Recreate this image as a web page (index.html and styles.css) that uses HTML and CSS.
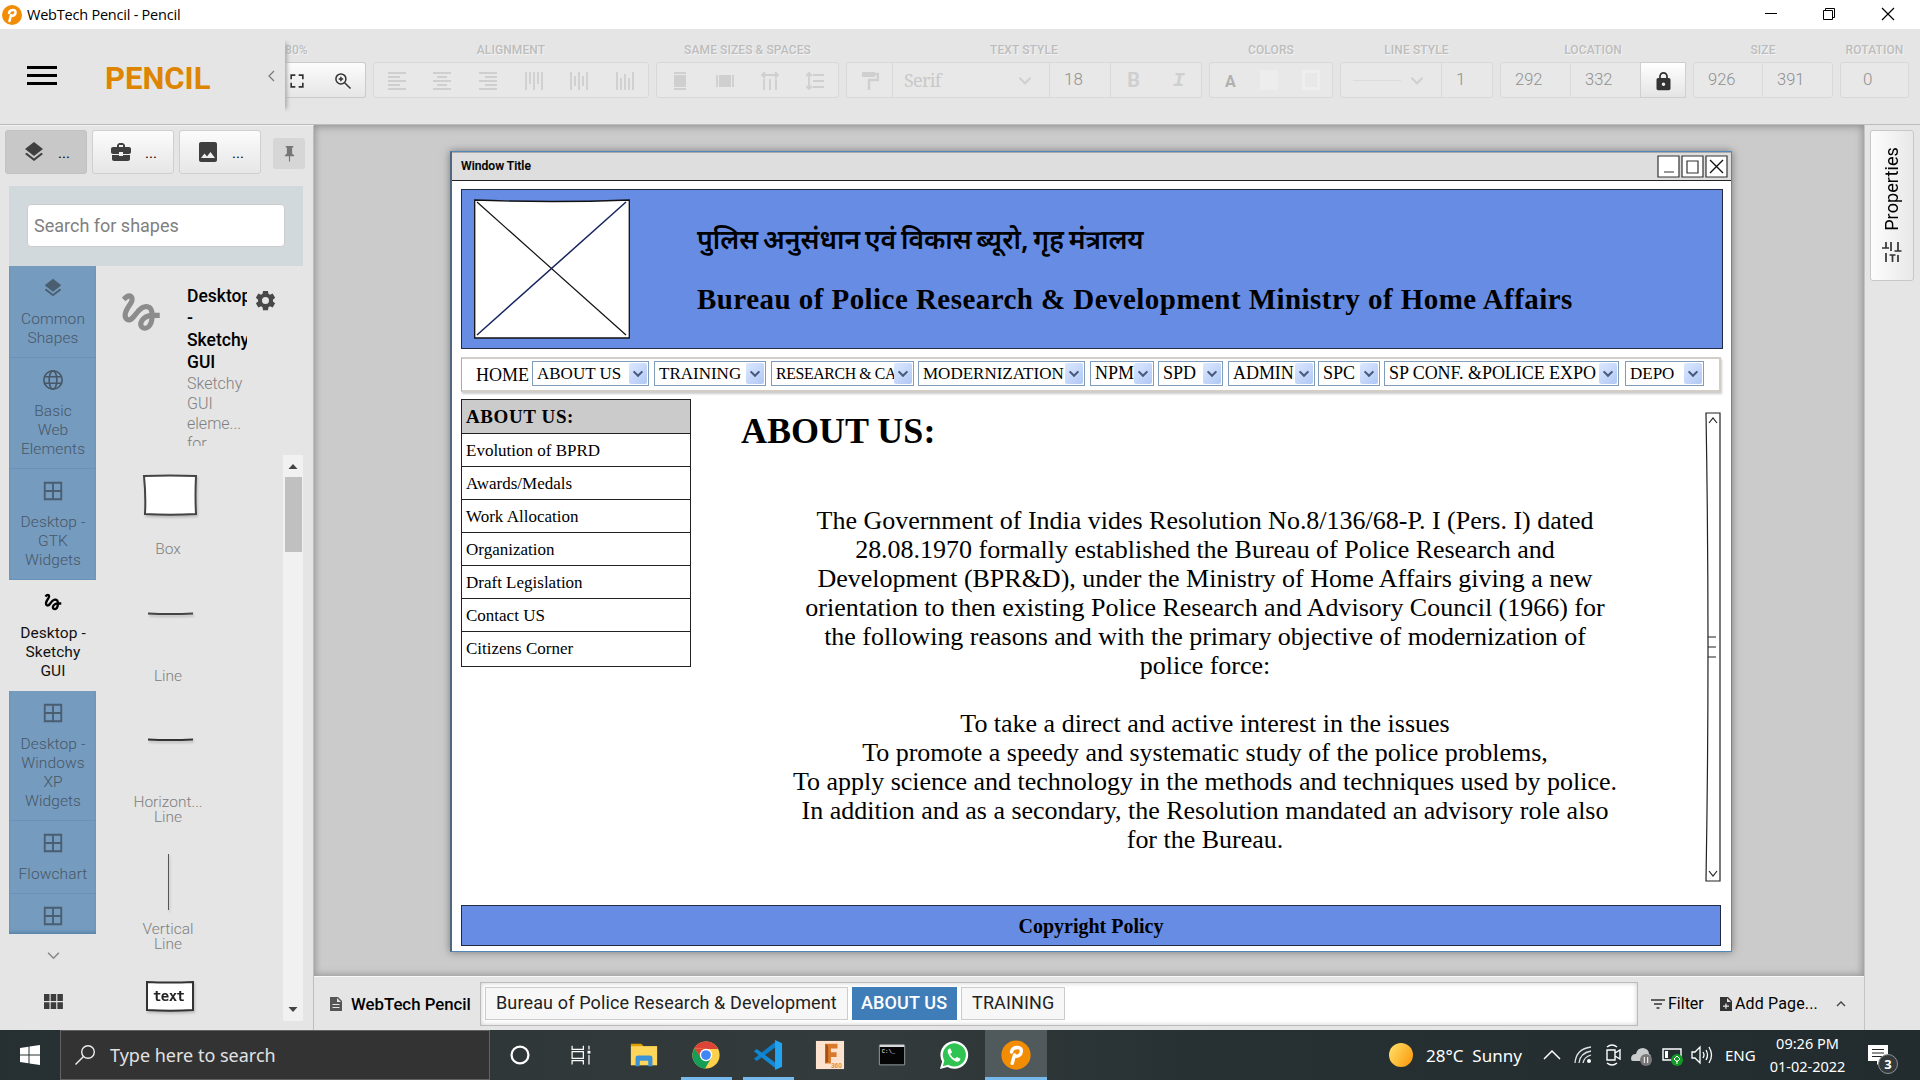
FILE: index.html
```html
<!DOCTYPE html>
<html lang="en">
<head>
<meta charset="utf-8">
<title>WebTech Pencil - Pencil</title>
<link rel="stylesheet" href="styles.css">
</head>
<body>
<svg class="defs" width="0" height="0">
  <symbol id="layers" viewBox="0 0 24 24"><path d="M12 18.54l-7.37-5.73L3 14.07l9 7 9-7-1.63-1.27zM12 16l7.36-5.73L21 9l-9-7-9 7 1.63 1.27z"/></symbol>
  <symbol id="grid4" viewBox="0 0 24 24"><path d="M2 2h20v20H2zM4 4v7h7V4zM13 4v7h7V4zM4 13v7h7v-7zM13 13v7h7v-7z" fill-rule="evenodd"/></symbol>
  <symbol id="squiggle" viewBox="0 0 24 24"><path d="M4.59 6.89c.7-.71 1.4-1.35 1.71-1.22.5.2 0 1.03-.3 1.52-.25.42-2.86 3.89-2.86 6.31 0 1.28.48 2.34 1.34 2.98.75.56 1.74.73 2.64.46 1.07-.31 1.95-1.4 3.06-2.77 1.21-1.49 2.83-3.44 4.08-3.44 1.63 0 1.65 1.01 1.76 1.79-3.78.64-5.38 3.67-5.38 5.37s1.44 3.09 3.21 3.09c1.63 0 4.29-1.33 4.69-6.1H21v-2.5h-2.47c-.15-1.65-1.09-4.2-4.03-4.2-2.25 0-4.18 1.91-4.94 2.84-.58.73-2.06 2.48-2.29 2.72-.25.3-.68.84-1.11.84-.45 0-.72-.83-.36-1.92.35-1.09 1.4-2.86 1.85-3.52.78-1.14 1.3-1.92 1.3-3.28C8.95 3.69 7.31 3 6.44 3 5.12 3 3.97 4 3.72 4.25c-.36.36-.66.66-.88.93zm9.29 11.66c-.31 0-.74-.26-.74-.72 0-.6.73-2.2 2.87-2.76-.3 2.69-1.43 3.48-2.13 3.48z"/></symbol>
  <symbol id="down" viewBox="0 0 16 16"><path d="M3 5l5 5 5-5" fill="none" stroke="currentColor" stroke-width="2.400"/></symbol>
</svg>

<header class="titlebar">
  <svg class="app-logo" viewBox="0 0 40 40"><circle cx="20" cy="20" r="20" fill="#f28c05"/><path d="M15 32l3-12M14 16q1-6 8-6q6 0 5 6q-1 6-9 6" fill="none" stroke="#fff" stroke-width="5" stroke-linecap="round"/></svg>
  <span class="titlebar-text">WebTech Pencil - Pencil</span>
  <svg class="win-controls" viewBox="0 0 140 29"><g fill="none" stroke="#000"><path d="M6 13.500h12"/><path d="M64.500 10.500h9v9h-9zM66.500 10.500v-2h9v9h-2"/><path d="M123 8l12 12M135 8l-12 12" stroke-width="1.200"/></g></svg>
</header>

<section class="toolbar">
  <div class="brand">
    <span class="burger"><i></i><i></i><i></i></span>
    <b class="brand-name">PENCIL</b>
    <svg class="collapse" viewBox="0 0 8 12"><path d="M7 1L2 6l5 5" fill="none" stroke="#777" stroke-width="1.200"/></svg>
  </div>
  <div class="group g-zoom on"><label>80%</label><div class="box">
    <svg viewBox="0 0 24 24"><path d="M5 10V5h5M14 5h5v5M19 14v5h-5M10 19H5v-5" fill="none" stroke="#333" stroke-width="2"/></svg>
    <svg viewBox="0 0 24 24"><g fill="none" stroke="#333" stroke-width="1.800"><circle cx="9.500" cy="9.500" r="6"/><path d="M14 14l7 7M9.500 6.800v5.400M6.800 9.500h5.400"/></g></svg>
  </div></div>
  <div class="group g-align"><label>ALIGNMENT</label><div class="box">
    <svg viewBox="0 0 18 18"><path d="M0 1h18M0 5h12M0 9h18M0 13h12M0 17h18"/></svg>
    <svg viewBox="0 0 18 18"><path d="M0 1h18M4 5h10M0 9h18M4 13h10M0 17h18"/></svg>
    <svg viewBox="0 0 18 18"><path d="M0 1h18M6 5h12M0 9h18M6 13h12M0 17h18"/></svg>
    <svg viewBox="0 0 18 18"><path d="M1 0v18M5 0v12M9 0v18M13 0v12M17 0v18"/></svg>
    <svg viewBox="0 0 18 18"><path d="M1 0v18M5 4v10M9 0v18M13 4v10M17 0v18"/></svg>
    <svg viewBox="0 0 18 18"><path d="M1 0v18M5 6v12M9 2v16M13 6v12M17 0v18"/></svg>
  </div></div>
  <div class="group g-same"><label>SAME SIZES &amp; SPACES</label><div class="box">
    <svg viewBox="0 0 18 18"><path d="M3 1h12M3 17h12"/><path class="solid" d="M3 3h12v12H3z"/></svg>
    <svg viewBox="0 0 18 18"><path d="M1 3v12M17 3v12"/><path class="solid" d="M3 3h12v12H3z"/></svg>
    <svg viewBox="0 0 18 18"><path d="M3 7v11M9 7v11M15 7v11M1 3h16M4 0L1 3l3 3M14 0l3 3-3 3"/></svg>
    <svg viewBox="0 0 18 18"><path d="M7 3h11M7 9h11M7 15h11M3 1v16M0 4l3-3 3 3M0 14l3 3 3-3"/></svg>
  </div></div>
  <div class="group g-text"><label>TEXT STYLE</label><div class="box">
    <span class="cell c-paint"><svg viewBox="0 0 18 18"><path class="solid" d="M1 0h13v5H1z"/><path d="M14 2h3v6H8v10" stroke-width="2.400"/></svg></span>
    <span class="cell c-font"><span>Serif</span><svg class="chev" viewBox="0 0 16 16"><path d="M3 5l5 5 5-5"/></svg></span>
    <span class="cell c-size">18</span>
    <span class="cell c-bi"><b>B</b><b class="it">I</b></span>
  </div></div>
  <div class="group g-colors"><label>COLORS</label><div class="box">
    <b class="letter">A</b><i class="swatch"></i><i class="swatch hollow"></i>
  </div></div>
  <div class="group g-line"><label>LINE STYLE</label><div class="box">
    <span class="cell c-stroke"><i class="stroke"></i><svg class="chev" viewBox="0 0 16 16"><path d="M3 5l5 5 5-5"/></svg></span>
    <span class="cell c-num1">1</span>
  </div></div>
  <div class="group g-loc"><label>LOCATION</label><div class="box">
    <span class="cell c-num">292</span><span class="cell c-num">332</span>
    <span class="lock"><svg viewBox="0 0 24 24"><path fill="#333" fill-rule="evenodd" d="M18 8h-1V6c0-2.760-2.240-5-5-5S7 3.240 7 6v2H6c-1.100 0-2 .9-2 2v10c0 1.100.9 2 2 2h12c1.100 0 2-.9 2-2V10c0-1.100-.9-2-2-2zm-6 9a2 2 0 110-4 2 2 0 010 4zm3-9H9V6c0-1.660 1.340-3 3-3s3 1.340 3 3z"/></svg></span>
  </div></div>
  <div class="group g-dim"><label>SIZE</label><div class="box"><span class="cell c-num">926</span><span class="cell c-num">391</span></div></div>
  <div class="group g-rot"><label>ROTATION</label><div class="box"><span class="cell c-rot">0</span></div></div>
</section>

<main class="workspace">
  <aside class="left">
    <div class="tabs">
      <span class="tab active"><svg viewBox="0 0 24 24"><use href="#layers"/></svg><span>...</span></span>
      <span class="tab"><svg viewBox="0 0 24 24"><path fill-rule="evenodd" d="M10 16v-1H3v4c0 1.110.89 2 2 2h14c1.110 0 2-.89 2-2v-4h-7v1zM20 7h-4V5l-2-2h-4L8 5v2H4c-1.100 0-2 .9-2 2v3c0 1.110.89 2 2 2h6v-2h4v2h6c1.100 0 2-.9 2-2V9c0-1.100-.9-2-2-2zm-6 0h-4V5h4z"/></svg><span>...</span></span>
      <span class="tab"><svg viewBox="0 0 24 24"><path fill-rule="evenodd" d="M21 20V4c0-1.100-.9-2-2-2H5c-1.100 0-2 .9-2 2v16c0 1.100.9 2 2 2h14c1.100 0 2-.9 2-2zM8.500 13.500l2.500 3 3.500-4.500 4.500 6H5z"/></svg><span>...</span></span>
      <span class="pin"><svg viewBox="0 0 16 18"><path d="M4 1h8v1.500h-1.200V9L13 11v1H8.600v5L8 18l-.6-1v-5H3v-1l2.200-2V2.500H4z" fill="#777"/></svg></span>
    </div>
    <div class="search"><span class="search-input">Search for shapes</span></div>
    <div class="library">
      <nav class="cats">
        <div class="cat-list">
          <div class="cat"><svg><use href="#layers"/></svg>Common<br>Shapes</div>
          <div class="cat"><svg viewBox="0 0 24 24"><g fill="none" stroke="currentColor" stroke-width="1.800"><circle cx="12" cy="12" r="10"/><ellipse cx="12" cy="12" rx="4.200" ry="10"/><path d="M2.800 8.500h18.400M2.800 15.500h18.400"/></g></svg>Basic<br>Web<br>Elements</div>
          <div class="cat"><svg><use href="#grid4"/></svg>Desktop -<br>GTK<br>Widgets</div>
          <div class="cat sel"><svg><use href="#squiggle"/></svg>Desktop -<br>Sketchy<br>GUI</div>
          <div class="cat"><svg><use href="#grid4"/></svg>Desktop -<br>Windows<br>XP<br>Widgets</div>
          <div class="cat"><svg><use href="#grid4"/></svg>Flowchart</div>
          <div class="cat"><svg><use href="#grid4"/></svg></div>
        </div>
        <svg class="more" viewBox="0 0 14 10"><path d="M1 2l6 6 6-6" fill="none" stroke="#888" stroke-width="1.800"/></svg>
        <svg class="grid6" viewBox="0 0 19 15"><path d="M0 0h5.500v7H0zM6.700 0h5.500v7H6.700zM13.400 0h5.500v7h-5.500zM0 8.200h5.500v7H0zM6.700 8.200h5.500v7H6.700zM13.400 8.200h5.500v7h-5.500z" fill="#3d3d3d"/></svg>
      </nav>
      <div class="shapes">
        <div class="coll-head">
          <svg class="coll-icon"><use href="#squiggle"/></svg>
          <div class="coll-text"><b>Desktop<br>-<br>Sketchy<br>GUI</b><span>Sketchy<br>GUI<br>eleme...<br>for</span></div>
          <svg class="gear" viewBox="0 0 24 24"><path fill-rule="evenodd" d="M9.200 1h5.600l.6 3.300 1.700 1 3.100-1.200 2.800 4.800-2.500 2.100v2l2.500 2.100-2.800 4.800-3.100-1.200-1.700 1-.6 3.300H9.200l-.6-3.300-1.700-1-3.100 1.200L1 15.100 3.500 13v-2L1 8.900l2.800-4.800 3.100 1.200 1.700-1zM12 8a4 4 0 100 8 4 4 0 000-8z"/></svg>
        </div>
        <div class="shape-scroll">
          <div class="shape-list">
            <div class="shape"><svg viewBox="0 0 80 84"><path d="M14 21q26-1 52 0q-1 20 0 38q-26 1.500-51 0q1-18-1-38z" fill="#fff" stroke="#444" stroke-width="2"/></svg>Box</div>
            <div class="shape"><svg viewBox="0 0 80 84"><path d="M18 31.500q22 1 45 0" fill="none" stroke="#444" stroke-width="2"/></svg>Line</div>
            <div class="shape"><svg viewBox="0 0 80 84"><path d="M18 31.500q22 1 45 0" fill="none" stroke="#333" stroke-width="2"/></svg>Horizont...<br>Line</div>
            <div class="shape"><svg viewBox="0 0 80 84"><path d="M38.500 19v56" fill="none" stroke="#555" stroke-width="1"/></svg>Vertical<br>Line</div>
            <div class="shape last"><svg viewBox="0 0 80 70"><path d="M17 21q22 1 46 0v28q-22 1.500-46 0z" fill="#fff" stroke="#333" stroke-width="2"/><text x="23" y="40" class="sample">text</text></svg></div>
          </div>
          <div class="scrollbar"><svg viewBox="0 0 20 22"><path d="M5.500 14h9L10 9z" fill="#444"/></svg><i></i><svg class="end" viewBox="0 0 20 22"><path d="M5.500 8h9L10 13z" fill="#444"/></svg></div>
        </div>
      </div>
    </div>
  </aside>

  <section class="center">
    <div class="canvas">
      <article class="page">
        <div class="page-title"><b>Window Title</b>
          <svg viewBox="0 0 72 24"><g fill="#fff" stroke="#333" stroke-width="1.200"><path d="M1 1h21v21H1zM25 1h21v21H25zM49 1h21v21H49z"/><path d="M7 17h10M30 6h11v12H30z"/><path d="M53 5l13 13M66 5L53 18" stroke="#111" stroke-width="1.400"/></g></svg>
        </div>
        <div class="banner">
          <svg class="placeholder" viewBox="0 0 156 140"><path d="M.7 1q77 3 154.600 0v138H.7z" fill="#fff" stroke="#111" stroke-width="1.300"/><path d="M3 3l149 133" stroke="#111" stroke-width="1.200"/><path d="M152 3L3 136" stroke="#16245e" stroke-width="1.500"/></svg>
          <div class="banner-text"><div class="hindi" lang="hi">पुलिस अनुसंधान एवं विकास ब्यूरो, गृह मंत्रालय</div><h1>Bureau of Police Research &amp; Development Ministry of Home Affairs</h1></div>
        </div>
        <div class="menu">
          <span class="home">HOME</span>
          <span class="select s1">ABOUT US<i><svg><use href="#down"/></svg></i></span>
          <span class="select s2">TRAINING<i><svg><use href="#down"/></svg></i></span>
          <span class="select s3">RESEARCH &amp; CA<i><svg><use href="#down"/></svg></i></span>
          <span class="select s4">MODERNIZATION<i><svg><use href="#down"/></svg></i></span>
          <span class="select s5">NPM<i><svg><use href="#down"/></svg></i></span>
          <span class="select s6">SPD<i><svg><use href="#down"/></svg></i></span>
          <span class="select s7">ADMIN<i><svg><use href="#down"/></svg></i></span>
          <span class="select s8">SPC<i><svg><use href="#down"/></svg></i></span>
          <span class="select s9">SP CONF. &amp;POLICE EXPO<i><svg><use href="#down"/></svg></i></span>
          <span class="select s10">DEPO<i><svg><use href="#down"/></svg></i></span>
        </div>
        <div class="content">
          <div class="side">
            <b>ABOUT US:</b><span>Evolution of BPRD</span><span>Awards/Medals</span><span>Work Allocation</span><span>Organization</span><span>Draft Legislation</span><span>Contact US</span><span>Citizens Corner</span>
          </div>
          <div class="body">
            <h2>ABOUT US:</h2>
            <p>The Government of India vides Resolution No.8/136/68-P. I (Pers. I) dated<br>28.08.1970 formally established the Bureau of Police Research and<br>Development (BPR&amp;D), under the Ministry of Home Affairs giving a new<br>orientation to then existing Police Research and Advisory Council (1966) for<br>the following reasons and with the primary objective of modernization of<br>police force:<br><br>To take a direct and active interest in the issues<br>To promote a speedy and systematic study of the police problems,<br>To apply science and technology in the methods and techniques used by police.<br>In addition and as a secondary, the Resolution mandated an advisory role also<br>for the Bureau.</p>
          </div>
          <svg class="page-scroll" viewBox="0 0 16 470"><g fill="none" stroke="#222" stroke-width="1.200"><path d="M1 1h14v468H1q4-234 0-468zM4 11l4-5 4 5M4 459l4 5 4-5M3 225h8M3 235h8M3 245h8"/></g></svg>
        </div>
        <div class="copyright">Copyright Policy</div>
      </article>
    </div>
    <footer class="pages">
      <svg class="doc" viewBox="0 0 12 14"><path fill-rule="evenodd" d="M0 0h8l4 4v10H0zM7 1v4h4zM2.500 7v1h7V7zM2.500 10v1h7v-1z" fill="#555"/></svg>
      <b class="doc-name">WebTech Pencil</b>
      <div class="page-tabs"><span class="t1">Bureau of Police Research &amp; Development</span><span class="t2 cur">ABOUT US</span><span class="t3">TRAINING</span></div>
      <span class="act filter"><svg viewBox="0 0 14 10"><path d="M0 1h14M3 5h8M5.500 9h3" stroke="#333" stroke-width="1.700"/></svg>Filter</span>
      <span class="act add"><svg viewBox="0 0 12 14"><path fill-rule="evenodd" d="M0 0h8l4 4v10H0zM7 1v4h4zM5.300 6.500v2H3v1.200h2.300v2h1.300v-2H9V8.500H6.600v-2z" fill="#333"/></svg>Add Page...</span>
      <svg class="up" viewBox="0 0 10 8"><path d="M1 6l4-4 4 4" fill="none" stroke="#444" stroke-width="1.400"/></svg>
    </footer>
  </section>

  <aside class="right"><div class="props"><span>Properties</span><svg viewBox="0 0 20 20"><path d="M4 0v6M0 6h7M9 0v9M16 0v9M12.500 9h7M4 11v9M10.500 13v7M7.500 13h6M16 13v7" fill="none" stroke="#333" stroke-width="1.700"/></svg></div></aside>
</main>

<footer class="taskbar">
  <div class="start"><svg viewBox="0 0 20 20"><path d="M0 3l8.500-1.300v7.700H0zM9.500 1.500L20 0v9.400H9.500zM0 10.500h8.500v7.800L0 17zM9.500 10.500H20V20L9.500 18.500z" fill="#fff"/></svg></div>
  <div class="find"><svg viewBox="0 0 20 20"><g fill="none" stroke="#eee" stroke-width="1.400"><circle cx="13" cy="7" r="6.300"/><path d="M8.500 11.500L.5 19.500"/></g></svg><span>Type here to search</span></div>
  <div class="apps">
    <span><svg viewBox="0 0 32 32"><circle cx="16" cy="16" r="9" fill="none" stroke="#fff" stroke-width="2.400"/></svg></span>
    <span><svg viewBox="0 0 32 32"><path d="M6.500 6v4h12V6M6.500 26v-4h12v4M6.500 12.500h12v7h-12zM24.500 6v4M24.500 16v10" fill="none" stroke="#fff" stroke-width="1.300"/><path d="M23 11.500h3v3h-3z" fill="#fff"/></svg></span>
    <span><svg viewBox="0 0 32 32"><path d="M2 4h11l3 3H2z" fill="#e0a100"/><path d="M2 6.500h28V27H2z" fill="#ffd659"/><path d="M7 28v-9q0-2.500 2.500-2.500h13Q25 16.500 25 19v9h-4.500v-6h-9v6z" fill="#3b92d6"/></svg></span>
    <span class="open"><svg viewBox="0 0 32 32"><circle cx="16" cy="16" r="14.500" fill="#fdd14b"/><path d="M16 9.500L3.400 8.800A14.500 14.500 0 0128.600 8.800V9.500z" fill="#dc4437"/><path d="M3.400 8.800A14.500 14.500 0 0015 30.500l6.600-11.200L16 16l-5.600 3.200z" fill="#159e58"/><path d="M3.400 8.800l7 10.400L16 9.500z" fill="#dc4437"/><path d="M3.400 8.800l7 10.400-2 4z" fill="#159e58"/><circle cx="16" cy="16" r="6.600" fill="#fff"/><circle cx="16" cy="16" r="5.200" fill="#4285f4"/></svg></span>
    <span class="open"><svg viewBox="0 0 32 32"><path d="M1 20l3 2.500L25 7V1z" fill="#0d7fc9"/><path d="M1 12l3-2.500L25 25v6z" fill="#1288d3"/><path d="M23.500 0L31 3.500v25L23.500 32z" fill="#24a3ee"/></svg></span>
    <span><svg viewBox="0 0 32 32"><path d="M1 1h30v30H1z" fill="#fde3cf"/><path d="M11 4h13v5h-7v4h6v5h-6v7h-6z" fill="#d9792b"/><path d="M11 4l3 2v17l-3 2z" fill="#a54f13"/><text x="17" y="30" class="tiny">360</text></svg></span>
    <span><svg viewBox="0 0 32 32"><path d="M2.500 5.500h27v21h-27z" fill="#050505" stroke="#9aa0a2"/><path d="M3 5h26v2.500H3z" fill="#d5d9da"/><text x="5" y="14" class="prompt">C:\_</text></svg></span>
    <span><svg viewBox="0 0 32 32"><path d="M1 31l2.300-8A14.800 14.800 0 119 28.800z" fill="#fff"/><path d="M4 28l1.700-6A12.300 12.300 0 1110 26.400z" fill="#2fc351"/><path d="M11 9q-3 2-1 6 3 6 8 8 4 1 5-3l-4-2-2 2q-4-2-5-5l2-2-2-4z" fill="#fff"/></svg></span>
    <span class="open now"><svg viewBox="0 0 40 40"><circle cx="20" cy="20" r="19.500" fill="#f28c05"/><path d="M15 31l3-11M14 16q1-6 8-6q6 0 5 6q-1 6-9 6" fill="none" stroke="#fff" stroke-width="4.500" stroke-linecap="round"/></svg></span>
  </div>
  <div class="tray">
    <i class="sun"></i><span class="weather">28°C&nbsp; Sunny</span>
    <svg class="t-icon w1" viewBox="0 0 24 24"><path d="M4 16l8-8 8 8" fill="none" stroke="#fff" stroke-width="1.500"/></svg>
    <svg class="t-icon w2" viewBox="0 0 24 24"><g fill="none" stroke="#dfe3e4" stroke-width="1.300"><path d="M4 20Q5 6 20 4M8 20Q9 10 20 8M12 20Q13 14 20 12"/></g><circle cx="18" cy="18" r="2" fill="#fff"/></svg>
    <svg class="t-icon w3" viewBox="0 0 24 24"><g fill="none" stroke="#fff" stroke-width="1.400"><path d="M6 7h8v10H6zM14 10l5-3v9l-5-3M6 4q5-4 10 0M6 20q5 4 10 0"/></g></svg>
    <svg class="t-icon w4" viewBox="0 0 24 24"><path d="M2 16q0-5 5-5 1-6 7-6 6 1 6 6 3 1 2 7H4q-2 0-2-2z" fill="#c9cccd"/><circle cx="17" cy="17" r="6" fill="#777"/><path d="M15.300 14v6M18.700 14v6" stroke="#fff"/></svg>
    <svg class="t-icon w5" viewBox="0 0 24 24"><path d="M3 6h18v11H3z" fill="none" stroke="#fff" stroke-width="1.400"/><path d="M5 8h3v7H5z" fill="#fff"/><circle cx="17" cy="17" r="6" fill="#129b24"/><path d="M17 13l3 3-3 3-3-3zM17 17v4" stroke="#fff" fill="none"/></svg>
    <svg class="t-icon w6" viewBox="0 0 24 24"><g fill="none" stroke="#fff" stroke-width="1.300"><path d="M2 9h3l5-5v16l-5-5H2zM13 9q2 3 0 6M16 7q3 5 0 10M19 4q5 8 0 16"/></g></svg>
    <span class="lang">ENG</span>
    <span class="clock"><span>09:26 PM</span><span>01-02-2022</span></span>
    <span class="notif"><svg viewBox="0 0 32 32"><path d="M2 2h20v16h-7l-4 4v-4H2z" fill="#fff"/><path d="M6 6.500h12M6 10h12M6 13.500h12" stroke="#222"/><circle cx="22" cy="21" r="9.500" fill="#343a3b" stroke="#8c9293"/><text x="22" y="26" text-anchor="middle" class="badge">3</text></svg></span>
  </div>
</footer>
</body>
</html>
```
FILE: styles.css
```css
* { box-sizing: border-box; }
body { margin: 0; width: 1920px; height: 1080px; overflow: hidden; display: flex; flex-direction: column; font-family: Roboto, sans-serif; color: #000; background: #e5e5e5; }
svg { display: block; flex: none; }
.defs { position: absolute; }

.titlebar { height: 29px; flex: none; background: #fff; display: flex; align-items: center; padding-left: 2px; font: 14.500px "Open Sans", sans-serif; }
.app-logo { width: 20px; height: 20px; }
.titlebar-text { margin-left: 5px; letter-spacing: -.22px; }
.win-controls { width: 140px; height: 29px; margin-left: auto; margin-right: 21px; }

.toolbar { height: 96px; flex: none; display: flex; gap: 7px; border-bottom: 1px solid #bcbcbc; padding-top: 11px; }
.brand { width: 285px; height: 72px; margin-right: -7px; display: flex; align-items: center; padding: 0 10px 0 27px; z-index: 1; box-shadow: 5px 0 4px -3px #aaa; clip-path: inset(0 -8px 0 0); background: #e5e5e5; }
.burger { width: 30px; display: flex; flex-direction: column; gap: 5px; margin-bottom: 2px; }
.burger i { height: 3px; background: #000; }
.brand-name { margin-left: 48px; color: #dd8500; font-size: 31px; line-height: 36px; padding-top: 5px; }
.collapse { width: 8px; height: 12px; margin-left: auto; }
.group { display: flex; flex-direction: column; height: 58px; }
.group label { height: 22px; line-height: 20px; text-align: center; font-size: 12px; color: #bdbdbd; text-shadow: 1px 1px 0 #f3f3f3; white-space: nowrap; font-weight: 500; letter-spacing: .1px; }
.box { height: 36px; border: 1px solid #d8d8d8; border-radius: 3px; background: #e8e8e8; display: flex; align-items: center; justify-content: space-around; color: #909090; font-size: 17px; font-weight: 300; }
.box svg { width: 18px; height: 18px; fill: none; stroke: #cfcfcf; stroke-width: 1.800; margin-top: 2px; }
.box svg .solid { fill: #cfcfcf; stroke: none; }
.g-zoom { width: 81px; } .g-align { width: 276px; } .g-same { width: 183px; } .g-text { width: 356px; } .g-colors { width: 124px; } .g-line { width: 153px; } .g-loc { width: 186px; } .g-dim { width: 140px; } .g-rot { width: 69px; }
.g-zoom label { text-align: left; }
.g-zoom .box { background: linear-gradient(#fcfcfc, #e6e6e6); border: 1px solid #cacaca; border-left: 0; border-radius: 0 3px 3px 0; justify-content: space-between; padding: 0 12px 0 2px; }
.g-zoom svg { width: 20px; height: 20px; stroke: none; }
.g-text .box, .g-line .box, .g-loc .box, .g-dim .box, .g-rot .box { justify-content: flex-start; }
.cell { height: 34px; display: flex; align-items: center; border-right: 1px solid #dadada; }
.cell:last-child { border-right: 0; }
.c-paint { width: 46px; justify-content: center; }
.c-font { width: 157px; padding: 0 15px 0 11px; justify-content: space-between; font: 18px "Noto Serif", "Liberation Serif", serif; letter-spacing: -.7px; color: #c8c8c8; }
.c-size { width: 61px; padding: 0 0 2px 14px; }
.c-bi { flex: 1; justify-content: space-around; color: #cfcfcf; font-size: 20px; }
.c-bi b { font-weight: 700; }
.it { font-family: "Liberation Mono", monospace; font-style: italic; }
.g-colors .box { justify-content: space-between; padding: 0 12px 0 15px; }
.letter { color: #b0b0b0; font-size: 16px; margin-top: 2px; font-weight: 700; }
.swatch { width: 18px; height: 20px; background: #ededed; }
.hollow { background: none; border: 3px solid #eee; }
.c-stroke { width: 101px; justify-content: space-between; padding: 0 15px 0 12px; }
.stroke { width: 48px; height: 1px; background: #dcdcdc; }
.c-num1 { padding: 0 0 2px 14px; }
.c-num { width: 70px; padding: 0 0 2px 14px; font-size: 16.500px; }
.g-dim .c-num { width: 69px; }
.c-rot { padding: 0 0 2px 22px; }
.lock { flex: 1; height: 34px; display: flex; align-items: center; justify-content: center; background: linear-gradient(#fff, #e4e4e4); outline: 1px solid #cfcfcf; }
.lock svg { width: 21px; height: 21px; stroke: none; }

.workspace { flex: 1; display: flex; min-height: 0; }
.left { width: 314px; border-right: 1px solid #bdbdbd; border-top: 1px solid #f0f0f0; display: flex; flex-direction: column; }
.tabs { height: 60px; padding: 4px 0 0 5px; display: flex; gap: 5px; }
.tab { width: 82px; height: 44px; border: 1px solid #cfcfcf; border-radius: 3px; background: linear-gradient(#fcfcfc, #e6e6e6); display: flex; align-items: center; gap: 12px; padding-left: 16px; font-size: 15px; fill: #3f3f3f; }
.tab.active { background: #c8c8c8; border-color: #c2c2c2; }
.tab svg { width: 24px; height: 24px; }
.tab span { padding-top: 2px; }
.pin { width: 32px; height: 31px; margin: 8px 0 0 7px; background: #d6d6d6; border-radius: 3px; display: grid; place-items: center; }
.pin svg { width: 15px; height: 17px; }
.search { width: 294px; height: 80px; margin-left: 9px; background: #d2d9dc; padding: 18px 18px 0; flex: none; }
.search-input { display: block; width: 258px; height: 43px; background: #fff; border: 1px solid #ccc; border-radius: 4px; padding-left: 6px; font-size: 18px; line-height: 42px; color: #808080; }
.library { flex: 1; display: flex; padding-left: 9px; min-height: 0; }
.cats { width: 87px; display: flex; flex-direction: column; align-items: center; }
.cat-list { width: 87px; height: 668px; overflow: hidden; background: #759bbf; flex: none; box-shadow: inset 0 -3px 4px -2px #4d779e; }
.cat { padding: 10px 0 9px 1px; border-bottom: 1px solid #6a91b7; font-size: 15.500px; line-height: 19px; text-align: center; color: #475766; white-space: nowrap; font-weight: 300; fill: #4a5e70; letter-spacing: .1px; }
.cat svg { width: 22px; height: 22px; margin: 1px auto 11px; }
.cat.sel { background: #e5e5e5; color: #111; fill: #000; border-color: #e5e5e5; font-weight: 400; }
.more { width: 13px; height: 9px; margin: 17px 0 0 1px; }
.grid6 { width: 19px; height: 15px; margin: 34px 0 0 1px; }
.shapes { flex: 1; display: flex; flex-direction: column; }
.coll-head { height: 180px; margin-bottom: 9px; display: flex; padding: 19px 0 0 20px; }
.coll-icon { width: 50px; height: 50px; margin-top: 2px; fill: #8c8c8c; }
.coll-text { width: 60px; height: 161px; margin-left: 21px; overflow: hidden; font-size: 16px; line-height: 20px; color: #808080; font-weight: 300; }
.coll-text b { display: block; font-size: 17.500px; line-height: 22px; color: #000; font-weight: 500; }
.coll-text span { display: block; padding-top: 1px; }
.gear { width: 21px; height: 21px; margin: 5px 0 0 8px; fill: #484848; }
.shape-scroll { flex: 1; display: flex; min-height: 0; }
.shape-list { width: 187px; height: 566px; overflow: hidden; padding-right: 43px; }
.shape { height: 126.500px; text-align: center; font-size: 15.500px; line-height: 15px; color: #808080; padding: 0 0 4px; font-weight: 300; }
.shape svg { width: 80px; height: 84px; margin: 0 auto 3px 34px; filter: drop-shadow(1px 2px 1px #bbb); }
.shape.last svg { height: 70px; }
.sample { font: bold 14px "DejaVu Sans Mono", monospace; letter-spacing: -.6px; fill: #222; }
.scrollbar { width: 20px; height: 566px; background: #f1f1f1; display: flex; flex-direction: column; align-items: center; }
.scrollbar svg { width: 20px; height: 22px; }
.scrollbar i { width: 17px; height: 75px; background: #c0c0c0; }
.scrollbar .end { margin-top: auto; }

.center { width: 1550px; display: flex; flex-direction: column; }
.canvas { height: 851px; background: #cbcbcb; box-shadow: inset 0 3px 10px -2px #909090, inset -3px -3px 8px -2px #a0a0a0, inset 3px 0 6px -2px #aaa; padding: 26px 0 0 136px; }
.page { width: 1282px; height: 801px; background: #fff; border: 1px solid #5188ba; box-shadow: 0 0 8px #777; padding: 0 9px 0 10px; font-family: "Liberation Serif", serif; display: flex; flex-direction: column; border-left: 2px solid #50677d; }
.page-title { height: 29px; margin: 0 -9px 0 -10px; background: #dedede; border-bottom: 1.500px solid #222; border-top: 1px solid #aaa; display: flex; justify-content: space-between; padding: 2px 2px 0 9px; font: 12px/22px Roboto, sans-serif; flex: none; }
.page-title b { font-weight: 500; font-size: 12.100px; -webkit-text-stroke: .2px #000; }
.page-title svg { width: 72px; height: 24px; }
.banner { height: 160px; margin: 8px 0 8px -1px; background: #678ce4; border: 1.500px solid #222a44; display: flex; padding: 9px 0 0 12px; flex: none; width: 1262px; }
.placeholder { width: 156px; height: 140px; }
.banner-text { margin-left: 67px; }
.hindi { font: 600 26.500px/40px "Noto Sans Devanagari", "Noto Sans", sans-serif; margin-top: 24px; height: 40px; white-space: nowrap; word-spacing: -2px; }
h1 { margin: 19px 0 0; font-size: 29px; line-height: 34px; white-space: nowrap; letter-spacing: .45px; }
.menu { height: 35px; flex: none; margin-left: -1px; border: 2px solid #d2cdc6; border-left: 1px solid #aaa; box-shadow: 1px 2px 2px #ccc; display: flex; align-items: flex-start; padding: 2px 0 0 14px; font-size: 17px; width: 1260px; }
.home { width: 56px; line-height: 28px; font-size: 18px; }
.select { height: 25px; border: 1px solid #7f9db9; background: #fff; display: flex; position: relative; padding-left: 4px; line-height: 23px; white-space: nowrap; flex: none; margin-right: 5px; }
.select i { position: absolute; right: 1px; top: 1px; width: 18px; height: 21px; background: linear-gradient(135deg, #dce8ff, #b0c8f5); border-radius: 2px; color: #47597c; display: grid; place-items: center; }
.select i svg { width: 14px; height: 14px; }
.s1 { width: 117px; } .s2 { width: 112px; } .s3 { width: 143px; font-size: 15.800px; letter-spacing: -.35px; margin-right: 4px; } .s4 { width: 167px; } .s5 { width: 64px; margin-right: 4px; } .s6 { width: 65px; } .s7 { width: 87px; margin-right: 3px; } .s8 { width: 62px; margin-right: 4px; } .s9 { width: 235px; margin-right: 6px; } .s10 { width: 79px; }
.s5, .s6, .s7, .s8, .s9 { font-size: 18px; letter-spacing: -.05px; }
.content { height: 513px; display: flex; padding-top: 7px; }
.side { width: 230px; height: 268px; margin-left: -1px; border: 1.500px solid #222; flex: none; display: flex; flex-direction: column; font-size: 17px; }
.side span, .side b { height: 33px; border-bottom: 1.500px solid #222; padding-left: 4px; line-height: 33px; flex: none; }
.side span:last-child { border: 0; }
.side b { height: 33.500px; background: #cbcbcb; font-size: 19px; line-height: 34px; letter-spacing: .6px; }
.body { width: 928px; margin-left: 50px; flex: none; }
h2 { margin: 11px 0 0; font-size: 36px; line-height: 42px; }
p { margin: 54px 0 0; font-size: 26px; line-height: 29px; text-align: center; white-space: nowrap; letter-spacing: -.01px; }
.page-scroll { width: 16px; height: 470px; margin: 13px 0 0 36px; }
.copyright { height: 41px; flex: none; width: 1260px; margin-left: -1px; background: #678ce4; border: 1.500px solid #222a44; font-weight: bold; font-size: 20px; line-height: 40px; text-align: center; }

.pages { height: 54px; border-top: 1px solid #f8f8f8; display: flex; align-items: center; font-size: 16.800px; padding-left: 16px; }
.doc { width: 12px; height: 14px; }
.doc-name { margin-left: 9px; width: 129px; white-space: nowrap; font-weight: 500; }
.page-tabs { width: 1158px; height: 44px; border: 1px solid #bbb; background: #fff; box-shadow: inset 0 0 5px #ccc; display: flex; gap: 4px; padding: 4px; flex: none; }
.page-tabs span { height: 33px; border: 1px solid #ccc; background: #f7f7f7; padding: 0 10px; line-height: 30px; font-size: 18px; white-space: nowrap; letter-spacing: .14px; color: #222; }
.page-tabs .t1 { width: 363px; } .page-tabs .t2 { width: 105px; padding: 0 8px; } .page-tabs .t3 { width: 104px; }
.page-tabs .cur { background: #3f7db9; border-color: #3f7db9; color: #fff; font-weight: 500; }
.act { display: flex; align-items: center; gap: 3px; white-space: nowrap; font-size: 16px; }
.filter { margin-left: 13px; width: 69px; } .filter svg { width: 14px; height: 10px; }
.add { letter-spacing: .15px; } .add svg { width: 12px; height: 14px; }
.up { width: 10px; height: 8px; margin-left: 18px; }
.right { flex: 1; border-left: 1px solid #c4c4c4; padding: 5px 0 0 5px; }
.props { width: 44px; height: 151px; border: 1px solid #c8c8c8; border-radius: 3px; background: linear-gradient(90deg, #fdfdfd, #e8e8e8); display: flex; flex-direction: column; align-items: center; padding-top: 16px; gap: 11px; font-size: 18px; }
.props span { writing-mode: vertical-rl; transform: rotate(180deg); line-height: 22px; letter-spacing: .1px; }
.props svg { width: 20px; height: 20px; }

.taskbar { height: 50px; flex: none; background: linear-gradient(90deg, #263033 0, #303839 30%, #343b3c 45%, #273133 62%, #222c2f); display: flex; font-family: "Noto Sans", sans-serif; color: #fff; }
.start { width: 60px; display: grid; place-items: center; }
.start svg { width: 20px; height: 20px; }
.find { width: 430px; background: #333; border: 1px solid #626262; display: flex; align-items: center; padding-left: 14px; gap: 15px; font-size: 18px; color: #e2e2e2; }
.find svg { width: 20px; height: 20px; }
.apps { display: flex; width: 557px; }
.apps span { width: 62px; height: 50px; display: grid; place-items: center; flex: none; }
.apps span:first-child { width: 60px; }
.apps span:nth-child(3) { width: 63px; }
.apps svg { width: 30px; height: 30px; }
.apps .open { background: linear-gradient(#76b9ed, #76b9ed) center bottom / 51px 3px no-repeat; }
.apps .now { background: linear-gradient(#76b9ed, #76b9ed) center bottom / 62px 3px no-repeat #50595b; }
.tiny { font: bold 7px "Liberation Sans", sans-serif; fill: #e08c45; }
.prompt { font: 6px "Liberation Mono", monospace; fill: #fff; }
.tray { flex: 1; display: flex; align-items: center; font-size: 17px; padding-left: 342px; }
.sun { width: 24px; height: 24px; border-radius: 50%; background: linear-gradient(120deg, #ffe46b, #fb9407); }
.weather { width: 113px; margin-left: 13px; padding-top: 1px; white-space: nowrap; }
.t-icon { width: 24px; height: 24px; margin-right: 6px; }
.w1 { margin-left: 1px; margin-right: 7px; }
.w4 { margin-left: -2px; }
.w5 { margin-left: 1px; }
.lang { width: 35px; font-size: 15px; margin-left: 5px; }
.clock { width: 95px; display: flex; flex-direction: column; align-items: center; font-size: 14.500px; line-height: 23px; white-space: nowrap; }
.notif { margin-left: 11px; } .notif svg { width: 32px; height: 32px; margin-top: 8px; }
.badge { font: bold 13px "Noto Sans", sans-serif; fill: #fff; }
```
